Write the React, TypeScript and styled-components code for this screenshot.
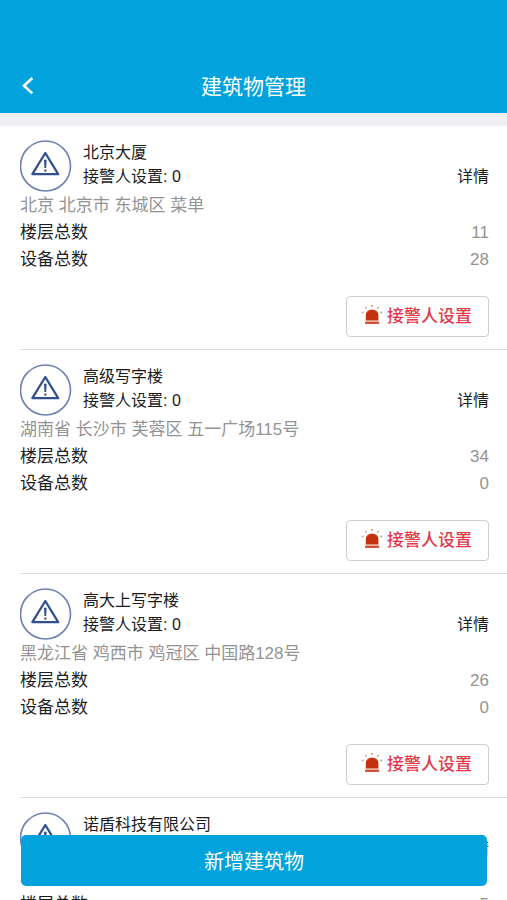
import React from "react";
import styled, { createGlobalStyle } from "styled-components";

const GlobalStyle = createGlobalStyle`
  * { box-sizing: border-box; }
  body {
    margin: 0;
    background: #fff;
    color: #1c1c1c;
    font-family: "Liberation Sans", "Noto Sans CJK SC", sans-serif;
  }
  button { font-family: inherit; cursor: pointer; }
`;

const Screen = styled.div`
  display: flex;
  flex-direction: column;
  height: 100vh;
`;

const Header = styled.header`
  flex: none;
  display: grid;
  grid-template-columns: 56px 1fr 56px;
  align-items: center;
  padding-top: 61px;
  background: #02a3dc;
  color: #fff;
`;

const BackButton = styled.button`
  display: flex;
  align-items: center;
  height: 52px;
  padding: 0 0 2px 20px;
  border: 0;
  background: none;
  color: inherit;
`;

const Title = styled.h1`
  margin: 0;
  font-size: 21px;
  line-height: 32px;
  font-weight: 400;
  text-align: center;
`;

const List = styled.main`
  flex: 1;
  min-height: 0;
  overflow-y: auto;
  scrollbar-width: none;
  border-top: 13px solid #efeff4;
  padding: 0 0 80px 20px;
`;

const Card = styled.article`
  padding: 14px 18px 12px 0;
  border-bottom: 1px solid #dcdcdc;
`;

const CardHead = styled.div`
  display: flex;
  gap: 11px;
  height: 52px;
`;

const Badge = styled.svg`
  flex: none;
  width: 52px;
  height: 52px;
`;

const HeadText = styled.div`
  flex: 1;
  padding-top: 1px;
`;

const HeadLine = styled.div`
  display: flex;
  justify-content: space-between;
  font-size: 16px;
  line-height: 24px;
`;

const Name = styled.h2`
  margin: 0;
  font-size: 16px;
  line-height: 24px;
  font-weight: 400;
`;

const DetailLink = styled.a`
  color: inherit;
  text-decoration: none;
`;

const Address = styled.p`
  margin: 0;
  font-size: 17px;
  line-height: 27px;
  color: #939393;
`;

const Stats = styled.dl`
  margin: 0;
`;

const StatRow = styled.div`
  display: flex;
  justify-content: space-between;
  font-size: 17px;
  line-height: 27px;
`;

const StatValue = styled.dd`
  margin: 0;
  color: #939393;
`;

const Actions = styled.div`
  display: flex;
  justify-content: flex-end;
  margin-top: 23px;
`;

const AlarmButton = styled.button`
  display: flex;
  align-items: center;
  gap: 4px;
  height: 41px;
  padding: 0 16px 4px 14px;
  border: 1px solid #cfcfcf;
  border-radius: 4px;
  background: #fff;
  color: #e23a4b;
  font-size: 17px;
  font-weight: 500;
`;

const AddButton = styled.button`
  position: fixed;
  left: 21px;
  right: 20px;
  bottom: 14px;
  height: 51px;
  border: 0;
  border-radius: 5px;
  background: #02a3dc;
  color: #fff;
  font-size: 20px;
`;

const WarningBadge = () => (
  <Badge viewBox="0 0 52 52" fill="none" aria-hidden="true">
    <circle cx="25.5" cy="26" r="25" stroke="#6d80b0" strokeWidth="1.6" />
    <path
      d="M25.3 13 L38.2 34.2 H12.4 Z"
      stroke="#35508f"
      strokeWidth="2.3"
      strokeLinejoin="round"
    />
    <path d="M24 19.8h2.6l-.4 8.2h-1.8z" fill="#35508f" />
    <circle cx="25.3" cy="30.6" r="1.2" fill="#35508f" />
  </Badge>
);

const SirenIcon = () => (
  <svg width="22" height="22" viewBox="0 0 22 22" aria-hidden="true">
    <path d="M4.8 16.6V11a6.3 5.6 0 0 1 12.6 0v5.6z" fill="#c5300f" />
    <rect x="4" y="17.4" width="14.2" height="2.6" rx="0.6" fill="#cf5238" />
    <g fill="#dc8d78">
      <circle cx="11" cy="2" r="1" />
      <circle cx="5" cy="3.8" r="0.9" />
      <circle cx="17" cy="3.8" r="0.9" />
      <circle cx="1.8" cy="8.4" r="0.9" />
      <circle cx="20.2" cy="8.4" r="0.9" />
    </g>
  </svg>
);

type Building = {
  name: string;
  receivers: number;
  address: string;
  floors: number;
  devices: number;
};

const buildings: Building[] = [
  { name: "北京大厦", receivers: 0, address: "北京 北京市 东城区 菜单", floors: 11, devices: 28 },
  { name: "高级写字楼", receivers: 0, address: "湖南省 长沙市 芙蓉区 五一广场115号", floors: 34, devices: 0 },
  { name: "高大上写字楼", receivers: 0, address: "黑龙江省 鸡西市 鸡冠区 中国路128号", floors: 26, devices: 0 },
  { name: "诺盾科技有限公司", receivers: 0, address: "北京 北京市", floors: 5, devices: 0 },
];

const BuildingCard = ({ building }: { building: Building }) => (
  <Card>
    <CardHead>
      <WarningBadge />
      <HeadText>
        <Name>{building.name}</Name>
        <HeadLine>
          <span>接警人设置: {building.receivers}</span>
          <DetailLink href="#detail">详情</DetailLink>
        </HeadLine>
      </HeadText>
    </CardHead>
    <Address>{building.address}</Address>
    <Stats>
      <StatRow>
        <dt>楼层总数</dt>
        <StatValue>{building.floors}</StatValue>
      </StatRow>
      <StatRow>
        <dt>设备总数</dt>
        <StatValue>{building.devices}</StatValue>
      </StatRow>
    </Stats>
    <Actions>
      <AlarmButton type="button">
        <SirenIcon />
        接警人设置
      </AlarmButton>
    </Actions>
  </Card>
);

export default function App() {
  return (
    <Screen>
      <GlobalStyle />
      <Header>
        <BackButton type="button" aria-label="返回">
          <svg width="16" height="20" viewBox="0 0 16 20" fill="none" aria-hidden="true">
            <path d="M12.3 2 L4 9.7 L12.3 17.4" stroke="#fff" strokeWidth="2.6" />
          </svg>
        </BackButton>
        <Title>建筑物管理</Title>
      </Header>
      <List>
        {buildings.map((building) => (
          <BuildingCard key={building.name} building={building} />
        ))}
      </List>
      <AddButton type="button">新增建筑物</AddButton>
    </Screen>
  );
}
